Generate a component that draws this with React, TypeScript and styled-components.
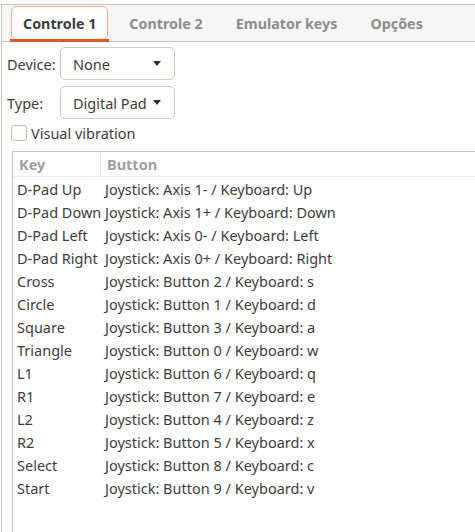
import * as React from 'react';
import styled, { createGlobalStyle } from 'styled-components';

const TEXT = '#3d3d3d';
const BORDER = '#c9c6c2';
const LIGHT_LINE = '#ececec';
const ORANGE = '#e95420';

const GlobalStyle = createGlobalStyle`
  html, body {
    margin: 0;
    background: #ffffff;
    overflow: hidden;
  }
  body {
    font-family: "Noto Sans", "Open Sans", sans-serif;
    font-size: 14.5px;
    color: ${TEXT};
  }
`;

type Binding = { key: string; button: string };

const bindings: Binding[] = [
  { key: `D-Pad Up`, button: `Joystick: Axis 1- / Keyboard: Up` },
  { key: `D-Pad Down`, button: `Joystick: Axis 1+ / Keyboard: Down` },
  { key: `D-Pad Left`, button: `Joystick: Axis 0- / Keyboard: Left` },
  { key: `D-Pad Right`, button: `Joystick: Axis 0+ / Keyboard: Right` },
  { key: `Cross`, button: `Joystick: Button 2 / Keyboard: s` },
  { key: `Circle`, button: `Joystick: Button 1 / Keyboard: d` },
  { key: `Square`, button: `Joystick: Button 3 / Keyboard: a` },
  { key: `Triangle`, button: `Joystick: Button 0 / Keyboard: w` },
  { key: `L1`, button: `Joystick: Button 6 / Keyboard: q` },
  { key: `R1`, button: `Joystick: Button 7 / Keyboard: e` },
  { key: `L2`, button: `Joystick: Button 4 / Keyboard: z` },
  { key: `R2`, button: `Joystick: Button 5 / Keyboard: x` },
  { key: `Select`, button: `Joystick: Button 8 / Keyboard: c` },
  { key: `Start`, button: `Joystick: Button 9 / Keyboard: v` },
];

const tabs = [`Controle 1`, `Controle 2`, `Emulator keys`, `Opções`];

const Window = styled.div`
  box-sizing: border-box;
  height: 532px;
  padding: 4px 0 0 1px;
`;

const Notebook = styled.div`
  height: 100%;
  border-left: 1px solid ${BORDER};
  border-top: 1px solid ${BORDER};
  display: flex;
  flex-direction: column;
`;

const TabBar = styled.div`
  display: flex;
  gap: 9px;
  height: 36px;
  padding-left: 9px;
  background: #f6f6f6;
  border-bottom: 1px solid ${BORDER};
`;

const Tab = styled.div<{ active?: boolean }>`
  position: relative;
  box-sizing: border-box;
  height: 34px;
  margin-top: 1px;
  padding: 0 11px;
  display: flex;
  align-items: center;
  font-size: 14.3px;
  font-weight: 700;
  color: ${({ active }) => (active ? TEXT : '#8d8d8d')};
  background: ${({ active }) => (active ? '#ffffff' : 'transparent')};
  border: 1px solid ${({ active }) => (active ? '#f3ab90' : 'transparent')};
  border-radius: 5px;

  &::after {
    content: '';
    display: ${({ active }) => (active ? 'block' : 'none')};
    position: absolute;
    left: -2px;
    right: -2px;
    bottom: -3px;
    height: 3px;
    background: ${ORANGE};
  }
`;

const Page = styled.div`
  flex: 1;
  padding: 5px 0 0 5px;
  display: flex;
  flex-direction: column;
`;

const Form = styled.div`
  display: grid;
  grid-template-columns: 47px 115px;
  column-gap: 6px;
  row-gap: 6px;
  align-items: center;
`;

const Label = styled.span`
  white-space: nowrap;
`;

const Combo = styled.div`
  box-sizing: border-box;
  height: 33px;
  padding: 0 13px 0 12px;
  display: flex;
  align-items: center;
  justify-content: space-between;
  border: 1px solid #cdc9c5;
  border-radius: 5px;
  background: #ffffff;
  white-space: nowrap;
`;

const Arrow = styled.span`
  width: 0;
  height: 0;
  border-left: 4px solid transparent;
  border-right: 4px solid transparent;
  border-top: 5px solid #2f2f2f;
`;

const CheckRow = styled.label`
  display: flex;
  align-items: center;
  gap: 4px;
  height: 18px;
  margin: 5px 0 0 4px;
`;

const CheckBox = styled.span`
  box-sizing: border-box;
  width: 16px;
  height: 16px;
  border: 1px solid #c3beb9;
  border-radius: 3px;
  background: #ffffff;
`;

const Tree = styled.div`
  flex: 1;
  margin: 9px 0 0 5px;
  border-left: 1px solid ${BORDER};
  border-top: 1px solid ${BORDER};
`;

const HeaderRow = styled.div`
  display: grid;
  grid-template-columns: 88px 1fr;
  height: 24px;
  border-bottom: 1px solid ${LIGHT_LINE};
`;

const HeaderCell = styled.div<{ divider?: boolean }>`
  display: flex;
  align-items: center;
  padding-left: 6px;
  font-weight: 700;
  color: #a0a0a0;
  border-right: ${({ divider }) => (divider ? `1px solid ${LIGHT_LINE}` : 'none')};
`;

const Row = styled.div`
  display: grid;
  grid-template-columns: 88px 1fr;
  height: 23px;
  align-items: center;
  white-space: nowrap;
`;

const Cell = styled.span`
  padding-left: 4px;
`;

export default function App() {
  return (
    <Window>
      <GlobalStyle />
      <Notebook>
        <TabBar>
          {tabs.map((t, i) => (
            <Tab key={t} active={i === 0}>
              {t}
            </Tab>
          ))}
        </TabBar>
        <Page>
          <Form>
            <Label>Device:</Label>
            <Combo>
              None
              <Arrow />
            </Combo>
            <Label>Type:</Label>
            <Combo>
              Digital Pad
              <Arrow />
            </Combo>
          </Form>
          <CheckRow>
            <CheckBox />
            Visual vibration
          </CheckRow>
          <Tree>
            <HeaderRow>
              <HeaderCell divider>Key</HeaderCell>
              <HeaderCell>Button</HeaderCell>
            </HeaderRow>
            {bindings.map((b) => (
              <Row key={b.key}>
                <Cell>{b.key}</Cell>
                <Cell>{b.button}</Cell>
              </Row>
            ))}
          </Tree>
        </Page>
      </Notebook>
    </Window>
  );
}
